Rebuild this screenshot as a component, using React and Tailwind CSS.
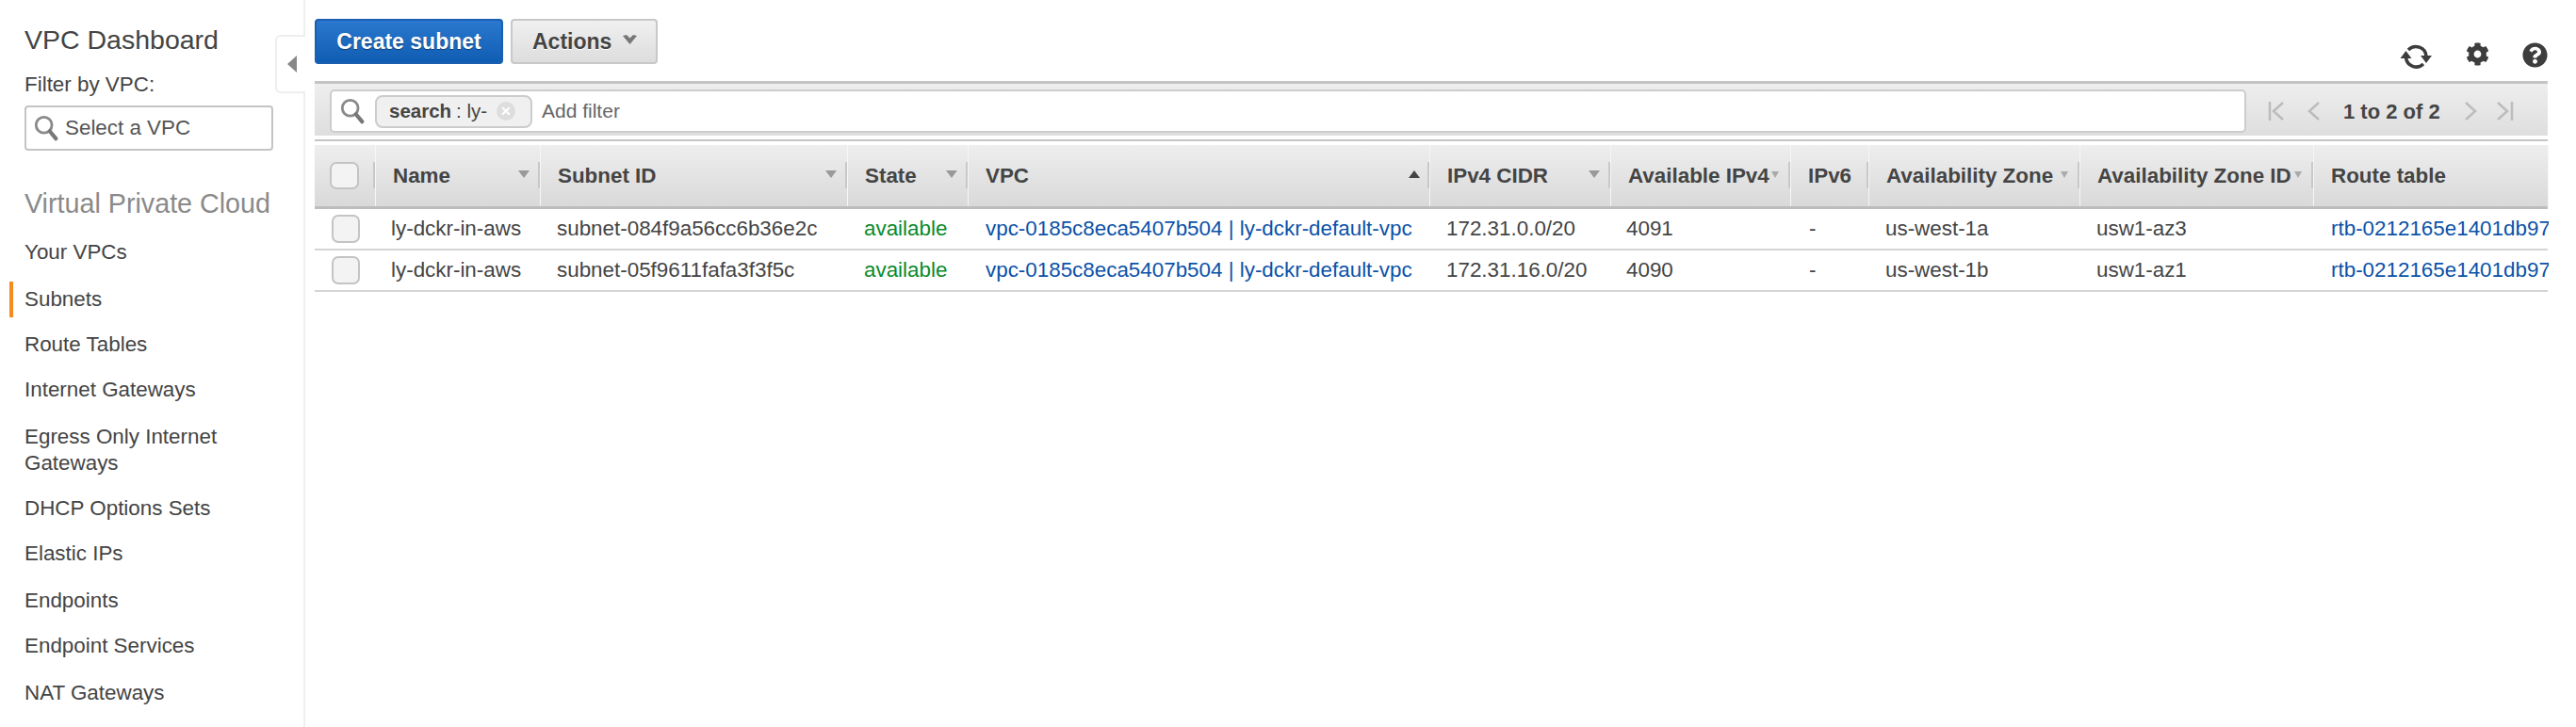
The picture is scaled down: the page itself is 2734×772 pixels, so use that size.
import { FaCog, FaQuestionCircle } from "react-icons/fa";

const navItems = [
  { label: "Your VPCs", h: "h-[48px]" },
  { label: "Subnets", h: "h-[52px]", active: true },
  { label: "Route Tables", h: "h-[44px]" },
  { label: "Internet Gateways", h: "h-[52px]" },
  { label: "Egress Only Internet Gateways", h: "h-[76px]" },
  { label: "DHCP Options Sets", h: "h-[48px]" },
  { label: "Elastic IPs", h: "h-[48px]" },
  { label: "Endpoints", h: "h-[52px]" },
  { label: "Endpoint Services", h: "h-[44px]" },
  { label: "NAT Gateways", h: "h-[56px]" },
];

const columns = [
  { label: "Name", sort: "down" },
  { label: "Subnet ID", sort: "down" },
  { label: "State", sort: "down" },
  { label: "VPC", sort: "up" },
  { label: "IPv4 CIDR", sort: "down" },
  { label: "Available IPv4", sort: "small" },
  { label: "IPv6" },
  { label: "Availability Zone", sort: "small" },
  { label: "Availability Zone ID", sort: "small" },
  { label: "Route table" },
];

const rows = [
  ["ly-dckr-in-aws", "subnet-084f9a56cc6b36e2c", "172.31.0.0/20", "4091", "us-west-1a", "usw1-az3"],
  ["ly-dckr-in-aws", "subnet-05f9611fafa3f3f5c", "172.31.16.0/20", "4090", "us-west-1b", "usw1-az1"],
];

const gridCols = "grid grid-cols-[65px_175px_326px_128px_490px_192px_191px_83px_224px_248px_249px]";

function SearchIcon({ className }) {
  return (
    <svg viewBox="0 0 28 30" className={className} fill="none">
      <circle cx="11.5" cy="11.5" r="9" stroke="#8a8a8a" strokeWidth="3" />
      <path d="M18 18.5L25 27" stroke="#777" strokeWidth="4.5" strokeLinecap="round" />
    </svg>
  );
}

function RefreshIcon() {
  return (
    <svg viewBox="0 0 35 26" className="mt-[2px] h-[26px] w-[35px]" fill="none">
      <path d="M9 6A11 11 0 0 1 28 13" stroke="#3d3d3d" strokeWidth="3.5" />
      <path d="M25 21A11 11 0 0 1 6.5 14" stroke="#3d3d3d" strokeWidth="3.5" />
      <path d="M0.5 15H12.5L6.5 7Z" fill="#3d3d3d" />
      <path d="M22 12H34L28 20Z" fill="#3d3d3d" />
    </svg>
  );
}

function Checkbox({ size }) {
  return <div className={`${size} rounded-[7px] border-2 border-[#c4c4c4] bg-[#f3f3f3]`} />;
}

function SortArrow({ sort }) {
  if (sort === "up") {
    return <span className="absolute right-[10px] top-[27px] h-0 w-0 border-x-[6px] border-b-[8px] border-x-transparent border-b-[#444]" />;
  }
  if (sort === "small") {
    return <span className="absolute right-[12px] top-[28px] h-0 w-0 border-x-[4px] border-t-[7px] border-x-transparent border-t-[#aaa]" />;
  }
  return <span className="absolute right-[11px] top-[27px] h-0 w-0 border-x-[6px] border-t-[8px] border-x-transparent border-t-[#999]" />;
}

function Pager({ d, className }) {
  return (
    <svg viewBox="0 0 20 24" className={className} fill="none" stroke="#bcbcbc" strokeWidth="2.5">
      <path d={d} />
    </svg>
  );
}

export default function App() {
  return (
    <div className="flex h-[772px] w-[2734px] overflow-hidden bg-white font-['Liberation_Sans',Arial,sans-serif] text-[#444]">
      <aside className="relative h-full w-[324px] shrink-0 border-r-2 border-[#eeeeee]">
        <div className="pl-[26px] pt-[24px]">
          <h1 className="h-[36px] text-[28.5px] leading-[36px] text-[#444]">VPC Dashboard</h1>
          <div className="mt-[16px] h-[28px] text-[22.4px] leading-[28px]">Filter by VPC:</div>
          <div className="mt-[8px] flex h-[48px] w-[264px] items-center rounded-[4px] border-2 border-[#c4c4c4] pl-[7px]">
            <SearchIcon className="h-[28px] w-[28px]" />
            <span className="ml-[6px] text-[22.4px] text-[#555]">Select a VPC</span>
          </div>
          <h2 className="mt-[38px] h-[36px] text-[28.7px] leading-[36px] text-[#8a8a8a]">Virtual Private Cloud</h2>
        </div>
        <nav className="mt-[10px]">
          {navItems.map((item) => (
            <div key={item.label} className={`flex items-center ${item.h}`}>
              <div className="flex w-[26px] shrink-0 justify-start pl-[10px]">
                {item.active && <div className="h-[38px] w-[4px] bg-[#f58a1f]" />}
              </div>
              <span className="w-[250px] text-[22.4px] leading-[28px] text-[#444]">{item.label}</span>
            </div>
          ))}
        </nav>
        <div className="absolute left-[292px] top-[37px] flex h-[62px] w-[32px] items-center rounded-l-[6px] border-y-2 border-l-2 border-[#eeeeee] bg-white pl-[11px]">
          <span className="h-0 w-0 border-y-[9px] border-r-[10px] border-y-transparent border-r-[#888]" />
        </div>
      </aside>

      <main className="flex min-w-0 flex-1 flex-col pl-[10px] pr-[30px] pt-[20px]">
        <div className="flex h-[66px] items-start">
          <button className="h-[48px] w-[200px] rounded-[4px] border-2 border-[#1a5fb0] bg-gradient-to-b from-[#2a78cf] to-[#0f5db3] text-[23px] font-bold text-white [text-shadow:0_1px_1px_rgba(0,0,0,0.4)]">
            Create subnet
          </button>
          <button className="ml-[8px] flex h-[48px] w-[156px] items-center gap-[12px] rounded-[4px] border-2 border-[#c8c8c8] bg-gradient-to-b from-[#f0f0f0] to-[#dddddd] pl-[21px] text-[23px] font-bold text-[#444] [text-shadow:0_1px_0_#ffffff]">
            Actions
            <svg viewBox="0 0 15 10" className="mb-[5px] h-[10px] w-[15px]">
              <path d="M0 1L4 0L7.5 3.5L11 0L15 1L7.5 10Z" fill="#777" />
            </svg>
          </button>
          <div className="ml-auto flex items-start pt-[25px] text-[#3d3d3d]">
            <RefreshIcon />
            <FaCog className="ml-[35px] h-[25px] w-[25px]" />
            <FaQuestionCircle className="ml-[35px] h-[27px] w-[27px]" />
          </div>
        </div>

        <div className="flex h-[58px] items-center border-t-[3px] border-[#c4c4c4] bg-gradient-to-b from-[#eeeeee] to-[#dedede] pl-[16px] pt-[3px]">
          <div className="flex h-[46px] w-[2034px] items-center rounded-[5px] border-2 border-[#cccccc] bg-white pl-[8px]">
            <SearchIcon className="h-[28px] w-[28px]" />
            <div className="ml-[10px] flex h-[35px] w-[167px] items-center rounded-[8px] border-2 border-[#cccccc] bg-[#f0f0f0] pl-[13px] text-[20.5px]">
              <span className="font-bold">search</span>
              <span className="ml-[5px]">: ly-</span>
              <span className="ml-[10px] flex h-[20px] w-[20px] items-center justify-center rounded-full bg-[#dddddd] text-[14px] leading-none font-bold text-white">✕</span>
            </div>
            <span className="ml-[10px] text-[21px] text-[#666]">Add filter</span>
          </div>
          <div className="ml-[23px] flex items-center">
            <Pager d="M2 2V22M16 3L6 12L16 21" className="h-[24px] w-[20px]" />
            <Pager d="M14 3L4 12L14 21" className="ml-[20px] h-[24px] w-[20px]" />
            <span className="ml-[20px] text-[22px] font-bold text-[#444]">1 to 2 of 2</span>
            <Pager d="M4 3L14 12L4 21" className="ml-[23px] h-[24px] w-[20px]" />
            <Pager d="M3 3L13 12L3 21M18 2V22" className="ml-[15px] h-[24px] w-[20px]" />
          </div>
        </div>

        <div className="mt-[4px] h-[2px] shrink-0 bg-[#c4c4c4]" />

        <div className={`${gridCols} mt-[4px] h-[68px] shrink-0 border-b-[3px] border-[#bdbdbd] bg-gradient-to-b from-[#eeeeee] to-[#d9d9d9]`}>
          <div className="relative flex items-center border-r border-[#f6f6f6] pl-[16px]">
            <Checkbox size="h-[29px] w-[31px]" />
            <span className="absolute right-0 top-[18px] h-[28px] w-[2px] bg-[#c8c8c8]" />
          </div>
          {columns.map((col, i) => (
            <div
              key={col.label}
              className="relative flex items-center border-r border-[#f6f6f6] pl-[18px] text-[22.4px] font-bold whitespace-nowrap text-[#444]"
            >
              {col.label}
              {col.sort && <SortArrow sort={col.sort} />}
              {i < columns.length - 1 && (
                <span className="absolute right-0 top-[18px] h-[28px] w-[2px] bg-[#c8c8c8]" />
              )}
            </div>
          ))}
        </div>

        {rows.map((r) => (
          <div key={r[1]} className={`${gridCols} h-[44px] shrink-0 items-center border-b-2 border-[#d5d5d5] text-[22.4px] whitespace-nowrap`}>
            <div className="pl-[18px]">
              <Checkbox size="h-[30px] w-[30px]" />
            </div>
            <div className="pl-[16px]">{r[0]}</div>
            <div className="pl-[17px]">{r[1]}</div>
            <div className="pl-[17px] text-[#0a8a2a]">available</div>
            <div className="pl-[18px] text-[#0b52a8]">vpc-0185c8eca5407b504 | ly-dckr-default-vpc</div>
            <div className="pl-[17px]">{r[2]}</div>
            <div className="pl-[16px]">{r[3]}</div>
            <div className="pl-[19px]">-</div>
            <div className="pl-[17px]">{r[4]}</div>
            <div className="pl-[17px]">{r[5]}</div>
            <div className="overflow-hidden pl-[18px] text-[#0b52a8]">rtb-0212165e1401db97</div>
          </div>
        ))}
      </main>
    </div>
  );
}
